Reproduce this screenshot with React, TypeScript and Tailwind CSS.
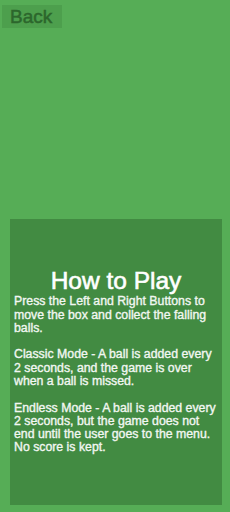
export default function App() {
  return (
    <div
      className="w-[230px] h-[512px] bg-[#56ad56] flex flex-col"
      style={{ fontFamily: '"Liberation Sans", Arial, sans-serif' }}
    >
      {/* Back button */}
      <div className="pt-[5px] pl-[2px]">
        <button className="w-[60px] h-[23px] bg-[#4d9f4d] text-[#2c662c] text-[19px] leading-[23px] text-left pl-[8px] [-webkit-text-stroke:0.5px_#2c662c]">
          Back
        </button>
      </div>

      {/* How to play panel */}
      <div className="mt-[189px] ml-[10px] w-[212px] h-[286px] bg-[#428b42] flex flex-col justify-center px-[4px]">
        <h1 className="text-white text-[24.5px] leading-[24px] text-center [-webkit-text-stroke:0.6px_#fff]">
          How to Play
        </h1>
        <div className="text-[#f2f7f2] text-[12.3px] leading-[13.3px] mt-[2px] [-webkit-text-stroke:0.35px_#f2f7f2]">
          <p>Press the Left and Right Buttons to move the box and collect the falling balls.</p>
          <p className="mt-[13.3px]">
            Classic Mode - A ball is added every 2 seconds, and the game is over when a ball is missed.
          </p>
          <p className="mt-[13.3px]">
            Endless Mode - A ball is added every 2 seconds, but the game does not end until the user goes to the menu.
            No score is kept.
          </p>
        </div>
      </div>
    </div>
  )
}
